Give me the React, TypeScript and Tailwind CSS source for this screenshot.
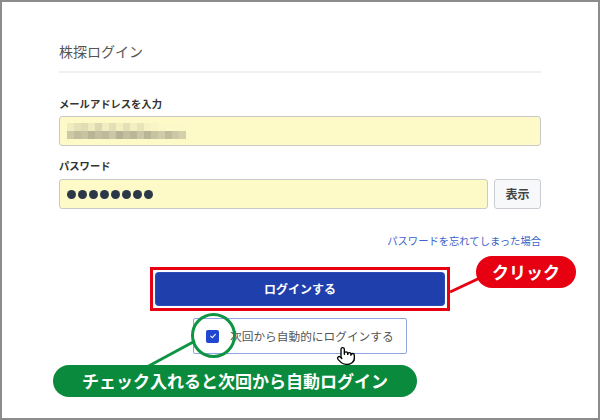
import { Pointer } from "lucide-react";

const mosaic = [
  ["#f0ecbf", "#e6e2b8", "#e0dcb4", "#efebbf", "#dcd8b1", "#f1edc0", "#e3dfb6", "#f3efc1", "#e4e0b7", "#f3efc1", "#e8e4b9", "#f6f2c4", "#f9f5c6", "#fbf7c8", "#fcf8c8", "#fcf8c8", "#fcf8c8"],
  ["#cdc9a5", "#c0bc9c", "#c7c3a1", "#b8b496", "#c4c09f", "#bdb99a", "#cbc7a4", "#b5b194", "#c3bf9e", "#bbb799", "#cbc7a4", "#b9b597", "#c8c4a2", "#d0cca7", "#bfbb9b", "#ccc8a5", "#d4d0aa"],
];

export default function App() {
  return (
    <div className="relative w-[600px] h-[420px] overflow-hidden bg-white border-2 border-[#8c8c8c] font-['Noto_Sans_CJK_JP','Noto_Sans',sans-serif]">
      <div className="px-[57px] pt-[39px]">
        {/* Title */}
        <h1 className="text-[14px] leading-[20px] text-[#555]">株探ログイン</h1>
        <div className="mt-[10px] h-[2px] bg-[#efefef]" />

        {/* Email */}
        <label className="block mt-[23px] text-[10.3px] leading-[16px] font-bold text-[#333]">メールアドレスを入力</label>
        <div className="mt-[4px] h-[30px] rounded-[3px] border border-[#c9c9c9] bg-[#fdfac8] flex items-center pl-[7px]">
          <div className="flex flex-col blur-[0.3px]">
            {mosaic.map((row, i) => (
              <div key={i} className="flex">
                {row.map((c, j) => (
                  <div key={j} className="w-[7px] h-[8px]" style={{ backgroundColor: c }} />
                ))}
              </div>
            ))}
          </div>
        </div>

        {/* Password */}
        <label className="block mt-[12px] text-[10.3px] leading-[16px] font-bold text-[#333]">パスワード</label>
        <div className="mt-[5px] flex gap-[6px]">
          <div className="flex-1 h-[30px] rounded-[3px] border border-[#c9c9c9] bg-[#fdfac8] flex items-center gap-[2px] pl-[7px]">
            {Array.from({ length: 8 }).map((_, i) => (
              <div key={i} className="w-[9px] h-[9px] rounded-full bg-[#2b3848]" />
            ))}
          </div>
          <button className="w-[47px] h-[30px] rounded-[3px] border border-[#c9ccd2] bg-[#f6f8fa] text-[12px] font-bold text-[#444]">
            表示
          </button>
        </div>

        {/* Forgot link */}
        <div className="mt-[24px] flex justify-end">
          <a className="text-[10.3px] leading-[16px] text-[#3d63c8]">パスワードを忘れてしまった場合</a>
        </div>

        {/* Login button */}
        <div className="mt-[24px] flex justify-center">
          <div className="relative">
            <button className="w-[288px] h-[32px] rounded-[3px] bg-[#1f3fad] text-white text-[12px] font-bold shadow-[0_0_0_1px_#2a4bb8]">
              ログインする
            </button>
            <div className="absolute -inset-[6px] border-[3px] border-[#e60012]" />
          </div>
        </div>

        {/* Remember me */}
        <div className="mt-[13px] flex justify-center">
          <label className="w-[214px] h-[36px] rounded-[2px] border border-[#8fa4e6] bg-white flex items-center pl-[12px] gap-[11px] whitespace-nowrap">
            <span className="w-[13px] h-[13px] shrink-0 rounded-[2px] bg-[#2047d0] flex items-center justify-center">
              <svg viewBox="0 0 12 12" className="w-[8px] h-[8px]">
                <path d="M2.5 6.2 L5 8.5 L9.5 3.5" fill="none" stroke="white" strokeWidth="1.6" strokeLinecap="round" strokeLinejoin="round" />
              </svg>
            </span>
            <span className="text-[11.7px] text-[#555]">次回から自動的にログインする</span>
          </label>
        </div>
      </div>

      {/* Annotation lines */}
      <svg className="absolute left-0 top-0 pointer-events-none" width="600" height="420">
        <line x1="448" y1="290" x2="480" y2="275" stroke="#e60012" strokeWidth="3" />
        <line x1="143" y1="366" x2="193" y2="339" stroke="#0f9444" strokeWidth="3" />
        <circle cx="211.5" cy="333.5" r="21" fill="none" stroke="#0f9444" strokeWidth="3" />
      </svg>

      {/* Click label */}
      <div className="absolute left-[474px] top-[254px] w-[100px] h-[32px] rounded-full bg-[#e60012] flex items-center justify-center text-white text-[17px] font-bold">
        クリック
      </div>

      {/* Green label */}
      <div className="absolute left-[51px] top-[363px] w-[364px] h-[32px] rounded-full bg-[#0a8a3c] flex items-center justify-center text-white text-[17px] font-bold">
        チェック入れると次回から自動ログイン
      </div>

      {/* Cursor */}
      <Pointer className="absolute left-[334px] top-[344px] w-[20px] h-[20px] text-black fill-white" strokeWidth={1.6} />
    </div>
  );
}
